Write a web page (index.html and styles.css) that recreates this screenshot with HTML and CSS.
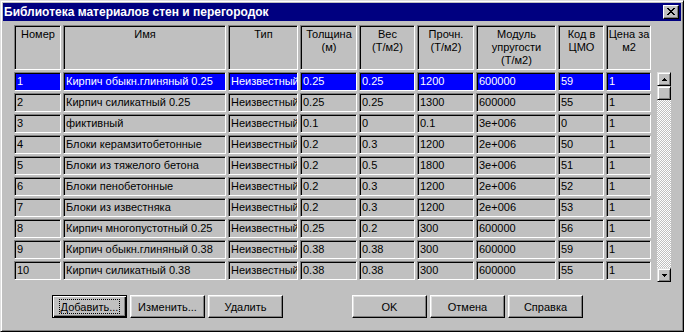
FILE: index.html
```html
<!DOCTYPE html>
<html lang="ru">
<head>
<meta charset="utf-8">
<title>Библиотека материалов стен и перегородок</title>
<link rel="stylesheet" href="styles.css">
</head>
<body>
<div class="window">
  <div class="titlebar">
    <span class="title">Библиотека материалов стен и перегородок</span>
    <div class="close">
      <svg width="8" height="7" viewBox="0 0 8 7"><path d="M0 0h2v1h1v1h2V1h1V0h2v1H7v1H6v1H5v1h1v1h1v1h1v1H6V6H5V5H3v1H2v1H0V6h1V5h1V4h1V3H2V2H1V1H0z" fill="#000"/></svg>
    </div>
  </div>
  <div class="main">
    <div class="grid">
      <div class="cell head">Номер</div>
      <div class="cell head">Имя</div>
      <div class="cell head">Тип</div>
      <div class="cell head">Толщина<br>(м)</div>
      <div class="cell head">Вес<br>(Т/м2)</div>
      <div class="cell head">Прочн.<br>(Т/м2)</div>
      <div class="cell head">Модуль<br>упругости<br>(Т/м2)</div>
      <div class="cell head">Код в<br>ЦМО</div>
      <div class="cell head">Цена за<br>м2</div>

      <div class="cell sel">1</div><div class="cell sel">Кирпич обыкн.глиняный 0.25</div><div class="cell sel">Неизвестный</div><div class="cell sel">0.25</div><div class="cell sel">0.25</div><div class="cell sel">1200</div><div class="cell sel">600000</div><div class="cell sel">59</div><div class="cell sel">1</div>
      <div class="cell">2</div><div class="cell">Кирпич силикатный 0.25</div><div class="cell">Неизвестный</div><div class="cell">0.25</div><div class="cell">0.25</div><div class="cell">1300</div><div class="cell">600000</div><div class="cell">55</div><div class="cell">1</div>
      <div class="cell">3</div><div class="cell">фиктивный</div><div class="cell">Неизвестный</div><div class="cell">0.1</div><div class="cell">0</div><div class="cell">0.1</div><div class="cell">3e+006</div><div class="cell">0</div><div class="cell">1</div>
      <div class="cell">4</div><div class="cell">Блоки керамзитобетонные</div><div class="cell">Неизвестный</div><div class="cell">0.2</div><div class="cell">0.3</div><div class="cell">1200</div><div class="cell">2e+006</div><div class="cell">50</div><div class="cell">1</div>
      <div class="cell">5</div><div class="cell">Блоки из тяжелого бетона</div><div class="cell">Неизвестный</div><div class="cell">0.2</div><div class="cell">0.5</div><div class="cell">1800</div><div class="cell">3e+006</div><div class="cell">51</div><div class="cell">1</div>
      <div class="cell">6</div><div class="cell">Блоки пенобетонные</div><div class="cell">Неизвестный</div><div class="cell">0.2</div><div class="cell">0.3</div><div class="cell">1200</div><div class="cell">2e+006</div><div class="cell">52</div><div class="cell">1</div>
      <div class="cell">7</div><div class="cell">Блоки из известняка</div><div class="cell">Неизвестный</div><div class="cell">0.2</div><div class="cell">0.3</div><div class="cell">1200</div><div class="cell">2e+006</div><div class="cell">53</div><div class="cell">1</div>
      <div class="cell">8</div><div class="cell">Кирпич многопустотный 0.25</div><div class="cell">Неизвестный</div><div class="cell">0.25</div><div class="cell">0.2</div><div class="cell">300</div><div class="cell">600000</div><div class="cell">56</div><div class="cell">1</div>
      <div class="cell">9</div><div class="cell">Кирпич обыкн.глиняный 0.38</div><div class="cell">Неизвестный</div><div class="cell">0.38</div><div class="cell">0.38</div><div class="cell">300</div><div class="cell">600000</div><div class="cell">59</div><div class="cell">1</div>
      <div class="cell">10</div><div class="cell">Кирпич силикатный 0.38</div><div class="cell">Неизвестный</div><div class="cell">0.38</div><div class="cell">0.38</div><div class="cell">300</div><div class="cell">600000</div><div class="cell">55</div><div class="cell">1</div>
    </div>
    <div class="scrollbar">
      <div class="sbtn"><svg width="5" height="3" viewBox="0 0 5 3"><path d="M2 0h1v1h1v1h1v1H0V2h1V1h1z" fill="#000"/></svg></div>
      <div class="thumb"></div>
      <div class="track"></div>
      <div class="sbtn"><svg width="5" height="3" viewBox="0 0 5 3"><path d="M0 0h5v1H4v1H3v1H2V2H1V1H0z" fill="#000"/></svg></div>
    </div>
  </div>
  <div class="buttons">
    <div class="btn default"><span class="focus">Добавить...</span></div>
    <div class="btn">Изменить...</div>
    <div class="btn">Удалить</div>
    <div class="spacer"></div>
    <div class="btn">OK</div>
    <div class="btn">Отмена</div>
    <div class="btn">Справка</div>
  </div>
</div>
</body>
</html>
```

FILE: styles.css
```css
html, body {
  margin: 0;
  padding: 0;
  background: #c0c0c0;
}

body {
  font-family: "Liberation Sans", Arial, sans-serif;
  font-size: 11px;
  color: #000;
}

.window {
  box-sizing: border-box;
  width: 684px;
  height: 332px;
  background: #c0c0c0;
  border: 1px solid;
  border-color: #dfdfdf #000 #000 #dfdfdf;
  box-shadow: inset 1px 1px 0 #fff, inset -1px -1px 0 #808080;
  padding: 2px;
  display: flex;
  flex-direction: column;
}

.titlebar {
  height: 18px;
  background: #000080;
  display: flex;
  align-items: center;
  justify-content: space-between;
  padding: 0 2px 0 1px;
}

.title {
  color: #fff;
  font-weight: bold;
  font-size: 12px;
  white-space: nowrap;
}

.close {
  box-sizing: border-box;
  width: 16px;
  height: 14px;
  background: #c0c0c0;
  border: 1px solid;
  border-color: #fff #000 #000 #fff;
  box-shadow: inset -1px -1px 0 #808080;
  display: flex;
  align-items: center;
  justify-content: center;
  padding-bottom: 1px;
}

.main {
  display: flex;
  align-items: flex-start;
  padding: 4px 0 0 11px;
}

.grid {
  display: grid;
  grid-template-columns: 47px 163px 70px 57px 56px 57px 80px 46px 45px;
  grid-template-rows: 45px repeat(10, 19px);
  gap: 2px;
}

.cell {
  box-sizing: border-box;
  border: 1px solid;
  border-color: #808080 #fff #fff #808080;
  box-shadow: inset 1px 1px 0 #000;
  padding: 2px 0 0 2px;
  line-height: 13px;
  white-space: nowrap;
  overflow: hidden;
}

.cell.head {
  text-align: center;
  padding: 2px 0 0 1px;
  white-space: normal;
}

.cell.sel {
  background: #0000ff;
  color: #fff;
}

.scrollbar {
  margin-left: 6px;
  margin-top: 47px;
  width: 14px;
  height: 210px;
  display: flex;
  flex-direction: column;
}

.sbtn, .thumb {
  box-sizing: border-box;
  width: 14px;
  height: 14px;
  background: #c0c0c0;
  border: 1px solid;
  border-color: #dfdfdf #000 #000 #dfdfdf;
  box-shadow: inset 1px 1px 0 #fff, inset -1px -1px 0 #808080;
  display: flex;
  align-items: center;
  justify-content: center;
}

.track {
  flex: 1;
  background-color: #c0c0c0;
  background-image: repeating-conic-gradient(#fff 0 25%, #c0c0c0 0 50%);
  background-size: 2px 2px;
}

.buttons {
  display: flex;
  padding: 0 0 0 49px;
  margin-top: 13px;
  gap: 3px;
}

.spacer {
  width: 63px;
}

.btn {
  box-sizing: border-box;
  width: 75px;
  height: 23px;
  background: #c0c0c0;
  border: 1px solid;
  border-color: #fff #000 #000 #fff;
  box-shadow: inset -1px -1px 0 #808080, inset 1px 1px 0 #dfdfdf;
  display: flex;
  align-items: center;
  justify-content: center;
  white-space: nowrap;
}

.btn.default {
  border-color: #000;
  box-shadow: inset 1px 1px 0 #fff, inset -1px -1px 0 #000, inset -2px -2px 0 #808080;
}

.focus {
  box-sizing: border-box;
  width: 61px;
  height: 15px;
  border: 1px dotted #000;
  display: flex;
  align-items: center;
  justify-content: center;
}
```
